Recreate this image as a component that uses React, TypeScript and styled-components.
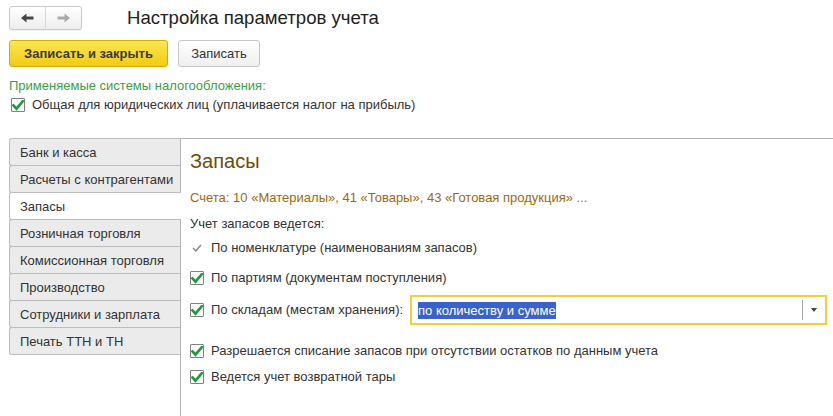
import React from 'react';
import styled, { createGlobalStyle } from 'styled-components';

const Global = createGlobalStyle`
  html, body { margin: 0; padding: 0; background: #fff; }
  body {
    font-family: "Liberation Sans", Arial, sans-serif;
    font-size: 13px;
    color: #333;
  }
  * { box-sizing: border-box; }
`;

const Page = styled.div`
  display: flex;
  flex-direction: column;
  padding-left: 9px;
  height: 416px;
  overflow: hidden;
`;

const Header = styled.div`
  display: flex;
  align-items: center;
  height: 24px;
  margin-top: 6px;
`;

const NavGroup = styled.div`
  display: flex;
  width: 73px;
  height: 24px;
  border: 1px solid #c8c8c8;
  border-radius: 3px;
  background: linear-gradient(#ffffff, #ededed);
  box-shadow: 0 1px 1px rgba(0, 0, 0, 0.06);
`;

const NavBtn = styled.button<{ $divider?: boolean }>`
  flex: 1;
  border: 0;
  padding: 0;
  background: transparent;
  display: flex;
  align-items: center;
  justify-content: center;
  border-left: ${(p) => (p.$divider ? '1px solid #d8d8d8' : 'none')};
`;

const Title = styled.h1`
  margin: 0 0 0 45px;
  font-size: 18.6px;
  font-weight: normal;
  color: #222;
  line-height: 24px;
`;

const ButtonRow = styled.div`
  display: flex;
  gap: 10px;
  margin-top: 10px;
`;

const PrimaryButton = styled.button`
  width: 159px;
  height: 27px;
  border: 1px solid #cfae0a;
  border-radius: 3px;
  background: linear-gradient(#fbe752, #f2cb12);
  font-family: inherit;
  font-size: 13px;
  font-weight: bold;
  color: #3a3a3a;
  padding: 0;
`;

const SecondaryButton = styled.button`
  width: 82px;
  height: 27px;
  border: 1px solid #c6c6c6;
  border-radius: 3px;
  background: linear-gradient(#ffffff, #efefef);
  font-family: inherit;
  font-size: 13px;
  color: #333;
  padding: 0;
`;

const TaxLabel = styled.div`
  margin-top: 11px;
  color: #3d9d48;
  line-height: 16px;
`;

const Row = styled.div<{ $mt: number }>`
  display: flex;
  align-items: center;
  margin-top: ${(p) => p.$mt}px;
  line-height: 16px;
  white-space: nowrap;
`;

const CheckBox = styled.span<{ $ml?: number }>`
  width: 14px;
  height: 14px;
  border: 1px solid #808080;
  border-radius: 1px;
  background: #fff;
  display: inline-flex;
  align-items: center;
  justify-content: center;
  margin-left: ${(p) => p.$ml ?? 0}px;
  margin-right: 7px;
  flex: none;
`;

const Main = styled.div`
  display: flex;
  flex: 1;
  margin-top: 25px;
`;

const TabList = styled.div`
  width: 171px;
  display: flex;
  flex-direction: column;
  flex: none;
`;

const Tab = styled.div<{ $active?: boolean }>`
  position: relative;
  z-index: ${(p) => (p.$active ? 1 : 0)};
  height: 28px;
  margin-top: -1px;
  margin-right: ${(p) => (p.$active ? '-1px' : '0')};
  padding-left: 10px;
  display: flex;
  align-items: center;
  border: 1px solid #bcbcbc;
  border-right: none;
  border-radius: 3px 0 0 3px;
  background: ${(p) => (p.$active ? '#fff' : '#ebebeb')};
  color: #333;
  &:first-child { margin-top: 0; }
`;

const Content = styled.div`
  flex: 1;
  border-top: 1px solid #b4b4b4;
  border-left: 1px solid #b4b4b4;
  padding: 11px 0 0 9px;
  display: flex;
  flex-direction: column;
`;

const Heading = styled.h2`
  margin: 0;
  font-size: 20px;
  font-weight: normal;
  line-height: 22px;
  color: #6e4d08;
`;

const Accounts = styled.div`
  margin-top: 18px;
  line-height: 16px;
  color: #9b6a10;
`;

const Plain = styled.div<{ $mt: number }>`
  margin-top: ${(p) => p.$mt}px;
  line-height: 16px;
  color: #333;
`;

const GrayTick = styled.span`
  width: 21px;
  display: inline-flex;
  align-items: center;
  padding-left: 2px;
  flex: none;
`;

const Select = styled.div`
  flex: 1;
  height: 30px;
  margin-left: 7px;
  margin-right: 6px;
  border: 2px solid #f1d03c;
  background: #fff;
  display: flex;
  align-items: center;
  padding-left: 6px;
`;

const Selected = styled.span`
  background: #3a62c9;
  color: #fff;
  line-height: 17px;
`;

const SelectSpacer = styled.span`
  flex: 1;
`;

const SelectDivider = styled.span`
  width: 1px;
  height: 20px;
  background: #a8a8a8;
`;

const SelectArrow = styled.span`
  width: 22px;
  display: flex;
  align-items: center;
  justify-content: center;
`;

const ArrowLeft = ({ color }: { color: string }) => (
  <svg width="13" height="10" viewBox="0 0 13 10">
    <path d="M0 5 L5.5 0.5 V3.6 H12.5 V6.4 H5.5 V9.5 Z" fill={color} />
  </svg>
);

const ArrowRight = ({ color }: { color: string }) => (
  <svg width="13" height="10" viewBox="0 0 13 10">
    <path d="M13 5 L7.5 0.5 V3.6 H0.5 V6.4 H7.5 V9.5 Z" fill={color} />
  </svg>
);

const GreenCheck = () => (
  <svg width="12" height="11" viewBox="0 0 12 11">
    <path d="M1.5 5.5 L4.5 8.7 L10.8 1.2" fill="none" stroke="#1f9a3a" strokeWidth="2.6" strokeLinecap="square" />
  </svg>
);

const SmallTick = () => (
  <svg width="10" height="8" viewBox="0 0 10 8">
    <path d="M1 4 L3.8 6.8 L9 1" fill="none" stroke="#8a8a8a" strokeWidth="1.5" />
  </svg>
);

const tabs = [
  'Банк и касса',
  'Расчеты с контрагентами',
  'Запасы',
  'Розничная торговля',
  'Комиссионная торговля',
  'Производство',
  'Сотрудники и зарплата',
  'Печать ТТН и ТН',
];

export default function App() {
  return (
    <>
      <Global />
      <Page>
        <Header>
          <NavGroup>
            <NavBtn><ArrowLeft color="#474747" /></NavBtn>
            <NavBtn $divider><ArrowRight color="#ababab" /></NavBtn>
          </NavGroup>
          <Title>Настройка параметров учета</Title>
        </Header>
        <ButtonRow>
          <PrimaryButton>Записать и закрыть</PrimaryButton>
          <SecondaryButton>Записать</SecondaryButton>
        </ButtonRow>
        <TaxLabel>Применяемые системы налогообложения:</TaxLabel>
        <Row $mt={3}>
          <CheckBox $ml={2}><GreenCheck /></CheckBox>
          Общая для юридических лиц (уплачивается налог на прибыль)
        </Row>
        <Main>
          <TabList>
            {tabs.map((t) => (
              <Tab key={t} $active={t === 'Запасы'}>{t}</Tab>
            ))}
          </TabList>
          <Content>
            <Heading>Запасы</Heading>
            <Accounts>Счета: 10 «Материалы», 41 «Товары», 43 «Готовая продукция» ...</Accounts>
            <Plain $mt={10}>Учет запасов ведется:</Plain>
            <Row $mt={8}>
              <GrayTick><SmallTick /></GrayTick>
              По номенклатуре (наименованиям запасов)
            </Row>
            <Row $mt={14}>
              <CheckBox><GreenCheck /></CheckBox>
              По партиям (документам поступления)
            </Row>
            <Row $mt={9}>
              <CheckBox><GreenCheck /></CheckBox>
              По складам (местам хранения):
              <Select>
                <Selected>по количеству и сумме</Selected>
                <SelectSpacer />
                <SelectDivider />
                <SelectArrow>
                  <svg width="6" height="4" viewBox="0 0 6 4"><path d="M0 0 H6 L3 4 Z" fill="#444" /></svg>
                </SelectArrow>
              </Select>
            </Row>
            <Row $mt={18}>
              <CheckBox><GreenCheck /></CheckBox>
              Разрешается списание запасов при отсутствии остатков по данным учета
            </Row>
            <Row $mt={10}>
              <CheckBox><GreenCheck /></CheckBox>
              Ведется учет возвратной тары
            </Row>
          </Content>
        </Main>
      </Page>
    </>
  );
}
